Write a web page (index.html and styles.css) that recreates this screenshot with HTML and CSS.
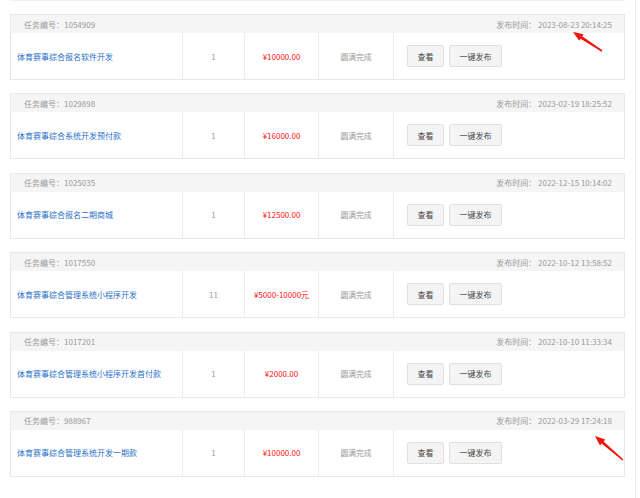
FILE: index.html
```html
<!DOCTYPE html>
<html lang="zh-CN">
<head>
    <meta charset="UTF-8">
    <meta name="viewport" content="width=device-width, initial-scale=1.0">
    <title>我的任务</title>
    <link rel="stylesheet" href="styles.css">
</head>
<body>
    <div class="page">
        <div class="task-list">
            <div class="task">
                <div class="task-head">
                    <span>任务编号：1054909</span>
                    <span>发布时间：&nbsp;2023-08-23 20:14:25</span>
                </div>
                <div class="task-body">
                    <div class="cell cell-title"><a href="#">体育赛事综合报名软件开发</a></div>
                    <div class="cell cell-num">1</div>
                    <div class="cell cell-price">¥10000.00</div>
                    <div class="cell cell-status">圆满完成</div>
                    <div class="cell cell-ops">
                        <button type="button" class="btn">查看</button>
                        <button type="button" class="btn">一键发布</button>
                    </div>
                </div>
            </div>

            <div class="task">
                <div class="task-head">
                    <span>任务编号：1029898</span>
                    <span>发布时间：&nbsp;2023-02-19 18:25:52</span>
                </div>
                <div class="task-body">
                    <div class="cell cell-title"><a href="#">体育赛事综合系统开发预付款</a></div>
                    <div class="cell cell-num">1</div>
                    <div class="cell cell-price">¥16000.00</div>
                    <div class="cell cell-status">圆满完成</div>
                    <div class="cell cell-ops">
                        <button type="button" class="btn">查看</button>
                        <button type="button" class="btn">一键发布</button>
                    </div>
                </div>
            </div>

            <div class="task">
                <div class="task-head">
                    <span>任务编号：1025035</span>
                    <span>发布时间：&nbsp;2022-12-15 10:14:02</span>
                </div>
                <div class="task-body">
                    <div class="cell cell-title"><a href="#">体育赛事综合报名二期商城</a></div>
                    <div class="cell cell-num">1</div>
                    <div class="cell cell-price">¥12500.00</div>
                    <div class="cell cell-status">圆满完成</div>
                    <div class="cell cell-ops">
                        <button type="button" class="btn">查看</button>
                        <button type="button" class="btn">一键发布</button>
                    </div>
                </div>
            </div>

            <div class="task">
                <div class="task-head">
                    <span>任务编号：1017550</span>
                    <span>发布时间：&nbsp;2022-10-12 13:58:52</span>
                </div>
                <div class="task-body">
                    <div class="cell cell-title"><a href="#">体育赛事综合管理系统小程序开发</a></div>
                    <div class="cell cell-num">11</div>
                    <div class="cell cell-price">¥5000-10000元</div>
                    <div class="cell cell-status">圆满完成</div>
                    <div class="cell cell-ops">
                        <button type="button" class="btn">查看</button>
                        <button type="button" class="btn">一键发布</button>
                    </div>
                </div>
            </div>

            <div class="task">
                <div class="task-head">
                    <span>任务编号：1017201</span>
                    <span>发布时间：&nbsp;2022-10-10 11:33:34</span>
                </div>
                <div class="task-body">
                    <div class="cell cell-title"><a href="#">体育赛事综合管理系统小程序开发首付款</a></div>
                    <div class="cell cell-num">1</div>
                    <div class="cell cell-price">¥2000.00</div>
                    <div class="cell cell-status">圆满完成</div>
                    <div class="cell cell-ops">
                        <button type="button" class="btn">查看</button>
                        <button type="button" class="btn">一键发布</button>
                    </div>
                </div>
            </div>

            <div class="task">
                <div class="task-head">
                    <span>任务编号：988967</span>
                    <span>发布时间：&nbsp;2022-03-29 17:24:18</span>
                </div>
                <div class="task-body">
                    <div class="cell cell-title"><a href="#">体育赛事综合管理系统开发一期款</a></div>
                    <div class="cell cell-num">1</div>
                    <div class="cell cell-price">¥10000.00</div>
                    <div class="cell cell-status">圆满完成</div>
                    <div class="cell cell-ops">
                        <button type="button" class="btn">查看</button>
                        <button type="button" class="btn">一键发布</button>
                    </div>
                </div>
            </div>
        </div>
    </div>

    <!-- red annotation arrows drawn over the screenshot -->
    <svg class="marks" width="640" height="498" viewBox="0 0 640 498">
        <polygon points="573,32 579.2,40.8 580.6,38.8 601.6,51.7 602.4,50.3 582.2,36.2 583.6,34.2" />
        <polygon points="595,436 600,445.5 601.6,443.6 622.5,460.6 623.5,459.4 603.6,441.4 605.2,439.5" />
    </svg>
</body>
</html>
```

FILE: styles.css
```css
body {
    margin: 0;
    background-color: #fff;
    font-family: "Noto Sans CJK SC", "Noto Sans", sans-serif;
    font-size: 8px;
    color: #999;
    position: relative;
}

.page {
    width: 636px;
    height: 498px;
    padding-left: 10px;
    border-right: 1px solid #ececec;
    overflow: hidden;
    box-sizing: border-box;
}

.task-list {
    width: 615px;
}

.task-list::before {
    content: "";
    display: block;
    height: 1px;
    background-color: #efefef;
    margin-bottom: 13px;
}

.task {
    border: 1px solid #e8e8e8;
    margin-bottom: 13.4px;
}

.task-head {
    display: flex;
    justify-content: space-between;
    align-items: center;
    height: 18px;
    padding: 0 12px 0 13px;
    background-color: #f5f5f5;
}

.task-body {
    display: flex;
    height: 46px;
    background-color: #fff;
}

.cell {
    display: flex;
    align-items: center;
    justify-content: center;
    border-right: 1px solid #ececec;
    box-sizing: border-box;
}

.cell-title {
    width: 172px;
    justify-content: flex-start;
    padding-left: 6px;
}

.cell-title a {
    color: #1f6fc8;
    text-decoration: none;
}

.cell-num {
    width: 62px;
}

.cell-price {
    width: 74px;
    color: #f11;
}

.cell-status {
    width: 75px;
    font-size: 7.8px;
}

.cell-ops {
    flex: 1;
    justify-content: flex-start;
    padding-left: 13px;
    border-right: none;
}

.btn {
    height: 22px;
    margin-right: 5px;
    font-family: inherit;
    font-size: 8px;
    color: #444;
    background-color: #f4f4f4;
    border: 1px solid #e0e0e0;
    border-radius: 2px;
    cursor: pointer;
    padding: 0;
}

.btn:first-child {
    width: 37px;
}

.btn:last-child {
    width: 53px;
}

.marks {
    position: absolute;
    top: 0;
    left: 0;
    pointer-events: none;
    fill: #f0140a;
}
```
